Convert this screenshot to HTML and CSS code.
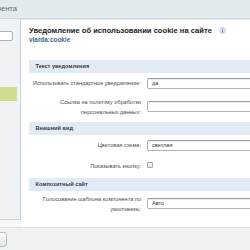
FILE: index.html
```html
<!DOCTYPE html>
<html>
<head>
    <title>Параметры компонента</title>
    <link rel="stylesheet" href="styles.css">
</head>
<body>
    <header class="titlebar">
        <div class="title">Параметры компонента</div>
    </header>

    <div class="content">
        <div class="sidebar">
            <input class="search" type="text">
            <div class="tree-item selected"></div>
        </div>

        <div class="main">
            <h1>
                Уведомление об использовании cookie на сайте
                <svg class="info" width="7" height="7" viewBox="0 0 7 7">
                    <circle cx="3.5" cy="3.5" r="3" fill="#e9eff4" stroke="#b8c6d1" stroke-width="0.8"/>
                    <rect x="3" y="1.4" width="1" height="0.9" fill="#3f73ab"/>
                    <rect x="3" y="2.8" width="1" height="2.8" fill="#3f73ab"/>
                </svg>
            </h1>
            <div class="subtitle">vlarda:cookie</div>

            <div class="group">Текст уведомления</div>
            <div class="row">
                <label>Использовать стандартное уведомление:</label>
                <div class="field"><div class="input">да</div></div>
            </div>
            <div class="row tall">
                <label>Ссылка на политику обработки<br>персональных данных:</label>
                <div class="field"><div class="input"></div></div>
            </div>

            <div class="group">Внешний вид</div>
            <div class="row">
                <label>Цветовая схема:</label>
                <div class="field"><div class="input">светлая</div></div>
            </div>
            <div class="row">
                <label>Показывать кнопку:</label>
                <div class="field"><span class="checkbox"></span></div>
            </div>

            <div class="group">Композитный сайт</div>
            <div class="row tall">
                <label>Голосование шаблона компонента по<br>умолчанию:</label>
                <div class="field"><div class="input">Авто</div></div>
            </div>
        </div>
    </div>

    <footer class="buttons">
        <button class="btn">Сохранить</button>
    </footer>
</body>
</html>
```

FILE: styles.css
```css
body {
    margin: 0;
    width: 250px;
    height: 250px;
    overflow: hidden;
    font-family: 'Liberation Sans', Arial, sans-serif;
    color: #333;
    background-color: #edf1f3;
}

.titlebar {
    height: 18px;
    border-bottom: 1px solid #d2dade;
    background-color: #e3eaee;
}

/* the dialog is scrolled so only the tail of its title shows */
.title {
    width: 17px;
    max-width: 17px;
    height: 18px;
    line-height: 18px;
    overflow: hidden;
    white-space: nowrap;
    direction: rtl;
    font-size: 7.6px;
    color: #666;
}

.content {
    display: flex;
    height: 208px;
    background-color: #f6f8f9;
    border-bottom: 1px solid #dde3e6;
}

.sidebar {
    width: 21px;
    height: 201px;
    flex-shrink: 0;
    box-sizing: border-box;
    background-color: #f0f3f5;
    border-right: 1px solid #cbd4d9;
    border-bottom: 1px solid #cbd4d9;
}

.search {
    display: block;
    box-sizing: border-box;
    width: 33px;
    height: 10px;
    margin: 12px 0 0 -20px;
    padding: 0;
    border: 1px solid #a9b5bc;
    border-radius: 2px;
    background: white;
}

.tree-item {
    height: 14px;
    width: 17px;
    margin-top: 46px;
}

.tree-item.selected {
    background-color: #cddf8f;
}

.main {
    flex: 1;
    background: white;
    border-top: 1px solid #e3e8eb;
    padding-left: 8px;
    overflow: hidden;
}

h1 {
    margin: 7px 0 0;
    font-size: 7.6px;
    line-height: 8.5px;
    font-weight: bold;
    color: #222;
    white-space: nowrap;
}

.info {
    vertical-align: -1px;
    margin-left: 5px;
}

.subtitle {
    font-size: 6.4px;
    line-height: 8px;
    font-weight: bold;
    color: #3a6a8b;
}

.group {
    margin-top: 2px;
    height: 13px;
    line-height: 13px;
    padding-left: 6.5px;
    background-color: #e1ebf5;
    font-size: 5.6px;
    font-weight: bold;
    color: #3c3c3c;
    white-space: nowrap;
}

.subtitle + .group {
    margin-top: 16px;
}

.row {
    display: grid;
    grid-template-columns: 112px 1fr;
    column-gap: 6px;
    align-items: center;
    padding: 5px 0;
}

.row.tall {
    padding: 3px 0;
}

.row label {
    text-align: right;
    font-size: 5.6px;
    line-height: 10px;
    color: #4d4d4d;
    white-space: nowrap;
}

.field {
    display: flex;
    align-items: center;
}

.input {
    box-sizing: border-box;
    width: 150px;
    height: 11px;
    padding-left: 4px;
    border: 1px solid #a7b2b9;
    border-top-color: #939fa6;
    border-radius: 2px;
    box-shadow: inset 0 1px 1px rgba(0, 0, 0, 0.08);
    font-size: 5.6px;
    line-height: 9px;
    color: #333;
}

.checkbox {
    display: block;
    box-sizing: border-box;
    width: 6px;
    height: 6px;
    margin-top: -2px;
    border: 1px solid #9ba6ad;
    border-radius: 1px;
    background: linear-gradient(#ffffff, #e3e8eb);
}

.buttons {
    padding-top: 4px;
}

/* the save button sits mostly left of the visible area */
.btn {
    display: block;
    box-sizing: border-box;
    width: 40px;
    height: 15px;
    margin-left: -33px;
    padding: 0 14px 0 0;
    border: 1px solid #b7c1c6;
    border-radius: 3px;
    background: linear-gradient(#fdfdfd, #e1e6e8);
    font-family: inherit;
    font-size: 5.6px;
    color: #333;
    white-space: nowrap;
    overflow: hidden;
}
```
